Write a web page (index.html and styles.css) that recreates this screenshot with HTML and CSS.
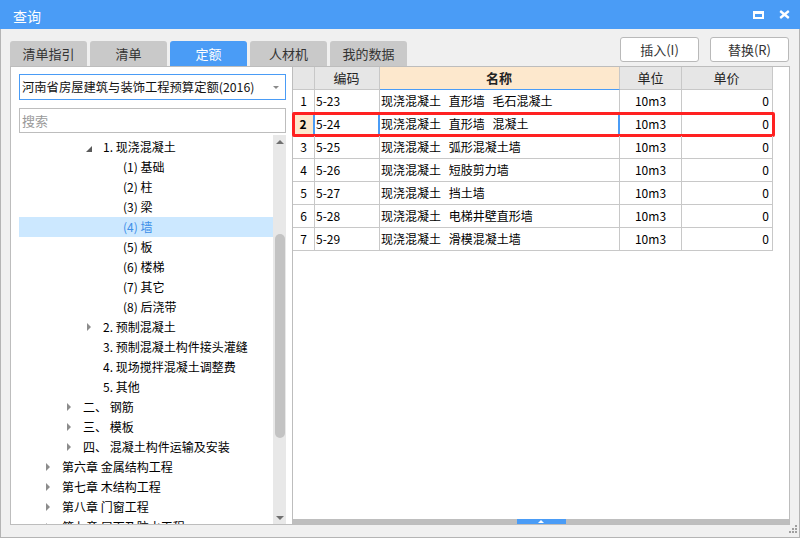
FILE: index.html
```html
<!DOCTYPE html>
<html lang="zh-CN">
<head>
<meta charset="utf-8">
<title>查询</title>
<link rel="stylesheet" href="styles.css">
</head>
<body>
<div class="window">
  <div class="titlebar">
    <span class="title">查询</span>
    <div class="win-btns">
      <svg class="ico" width="11" height="8" viewBox="0 0 11 8"><rect x="1" y="1" width="9" height="6" fill="none" stroke="#fff" stroke-width="2"/><rect x="0" y="0" width="11" height="3" fill="#fff"/></svg>
      <svg class="ico" width="11" height="9" viewBox="0 0 11 9"><path d="M1.2 1 L9.8 8 M9.8 1 L1.2 8" stroke="#fff" stroke-width="2.3" fill="none"/></svg>
    </div>
  </div>
  <div class="main">
    <div class="toprow">
      <div class="tabs">
        <div class="tab">清单指引</div>
        <div class="tab">清单</div>
        <div class="tab active">定额</div>
        <div class="tab">人材机</div>
        <div class="tab">我的数据</div>
      </div>
      <div class="actions">
        <button class="btn">插入(I)</button>
        <button class="btn">替换(R)</button>
      </div>
    </div>
    <div class="content">
      <div class="leftpanel">
        <div class="select"><span>河南省房屋建筑与装饰工程预算定额(2016)</span><i class="caret"></i></div>
        <input class="search" type="text" placeholder="搜索">
        <div class="tree">
          <div class="tree-list">
            <div class="node l2"><i class="tw open"></i><span>1. 现浇混凝土</span></div>
            <div class="node l3"><i class="tw"></i><span>(1) 基础</span></div>
            <div class="node l3"><i class="tw"></i><span>(2) 柱</span></div>
            <div class="node l3"><i class="tw"></i><span>(3) 梁</span></div>
            <div class="node l3 sel"><i class="tw"></i><span>(4) 墙</span></div>
            <div class="node l3"><i class="tw"></i><span>(5) 板</span></div>
            <div class="node l3"><i class="tw"></i><span>(6) 楼梯</span></div>
            <div class="node l3"><i class="tw"></i><span>(7) 其它</span></div>
            <div class="node l3"><i class="tw"></i><span>(8) 后浇带</span></div>
            <div class="node l2"><i class="tw closed"></i><span>2. 预制混凝土</span></div>
            <div class="node l2"><i class="tw"></i><span>3. 预制混凝土构件接头灌缝</span></div>
            <div class="node l2"><i class="tw"></i><span>4. 现场搅拌混凝土调整费</span></div>
            <div class="node l2"><i class="tw"></i><span>5. 其他</span></div>
            <div class="node l1"><i class="tw closed"></i><span>二、 钢筋</span></div>
            <div class="node l1"><i class="tw closed"></i><span>三、 模板</span></div>
            <div class="node l1"><i class="tw closed"></i><span>四、 混凝土构件运输及安装</span></div>
            <div class="node l0"><i class="tw closed"></i><span>第六章 金属结构工程</span></div>
            <div class="node l0"><i class="tw closed"></i><span>第七章 木结构工程</span></div>
            <div class="node l0"><i class="tw closed"></i><span>第八章 门窗工程</span></div>
            <div class="node l0"><i class="tw closed"></i><span>第九章 屋面及防水工程</span></div>
          </div>
          <div class="vscroll">
            <div class="sarrow"><i class="up"></i></div>
            <div class="sspace"></div>
            <div class="sthumb"></div>
            <div class="sfill"></div>
            <div class="sarrow"><i class="down"></i></div>
          </div>
        </div>
      </div>
      <div class="tablepanel">
        <div class="grid">
          <div class="row head">
            <div class="cell c-num"></div>
            <div class="cell c-code">编码</div>
            <div class="cell c-name">名称</div>
            <div class="cell c-unit">单位</div>
            <div class="cell c-price">单价</div>
          </div>
          <div class="row">
            <div class="cell c-num">1</div>
            <div class="cell c-code">5-23</div>
            <div class="cell c-name">现浇混凝土 直形墙 毛石混凝土</div>
            <div class="cell c-unit">10m3</div>
            <div class="cell c-price">0</div>
          </div>
          <div class="row sel">
            <div class="cell c-num">2</div>
            <div class="cell c-code">5-24</div>
            <div class="cell c-name">现浇混凝土 直形墙 混凝土</div>
            <div class="cell c-unit">10m3</div>
            <div class="cell c-price">0</div>
          </div>
          <div class="row">
            <div class="cell c-num">3</div>
            <div class="cell c-code">5-25</div>
            <div class="cell c-name">现浇混凝土 弧形混凝土墙</div>
            <div class="cell c-unit">10m3</div>
            <div class="cell c-price">0</div>
          </div>
          <div class="row">
            <div class="cell c-num">4</div>
            <div class="cell c-code">5-26</div>
            <div class="cell c-name">现浇混凝土 短肢剪力墙</div>
            <div class="cell c-unit">10m3</div>
            <div class="cell c-price">0</div>
          </div>
          <div class="row">
            <div class="cell c-num">5</div>
            <div class="cell c-code">5-27</div>
            <div class="cell c-name">现浇混凝土 挡土墙</div>
            <div class="cell c-unit">10m3</div>
            <div class="cell c-price">0</div>
          </div>
          <div class="row">
            <div class="cell c-num">6</div>
            <div class="cell c-code">5-28</div>
            <div class="cell c-name">现浇混凝土 电梯井壁直形墙</div>
            <div class="cell c-unit">10m3</div>
            <div class="cell c-price">0</div>
          </div>
          <div class="row">
            <div class="cell c-num">7</div>
            <div class="cell c-code">5-29</div>
            <div class="cell c-name">现浇混凝土 滑模混凝土墙</div>
            <div class="cell c-unit">10m3</div>
            <div class="cell c-price">0</div>
          </div>
        </div>
        <div class="hbar"><div class="hthumb"><i></i></div></div>
      </div>
    </div>
    <svg class="grip" width="8" height="8" viewBox="0 0 8 8">
      <rect x="6" y="0" width="2" height="2" fill="#a0a0a0"/>
      <rect x="3" y="3" width="2" height="2" fill="#a0a0a0"/>
      <rect x="6" y="3" width="2" height="2" fill="#a0a0a0"/>
      <rect x="0" y="6" width="2" height="2" fill="#a0a0a0"/>
      <rect x="3" y="6" width="2" height="2" fill="#a0a0a0"/>
      <rect x="6" y="6" width="2" height="2" fill="#a0a0a0"/>
    </svg>
  </div>
</div>
</body>
</html>
```

FILE: styles.css
```css
* { box-sizing: border-box; }
html, body { margin: 0; padding: 0; }
body {
  width: 800px;
  height: 538px;
  overflow: hidden;
  font-family: "Noto Sans CJK SC", "Microsoft YaHei", sans-serif;
  color: #000;
  background: #f0f0f0;
}
.window {
  width: 800px;
  height: 538px;
  display: flex;
  flex-direction: column;
}
.titlebar {
  height: 29px;
  flex: none;
  background: #4a9cf6;
  display: flex;
  align-items: center;
  padding: 0 10px 0 13px;
}
.title {
  color: #fff;
  font-size: 14px;
  line-height: 20px;
  margin-top: 2px;
}
.win-btns {
  margin-left: auto;
  display: flex;
  align-items: center;
  gap: 15px;
}
.ico { display: block; }

.main {
  position: relative;
  flex: 1;
  display: flex;
  flex-direction: column;
  border-left: 1px solid #b4b4b4;
  border-right: 1px solid #b4b4b4;
  border-bottom: 1px solid #b4b4b4;
  padding: 8px 9px 12px 9px;
  min-height: 0;
}
.toprow {
  height: 29px;
  flex: none;
  display: flex;
  justify-content: space-between;
  align-items: flex-start;
}
.tabs {
  display: flex;
  gap: 3px;
  padding-top: 4px;
}
.tab {
  width: 77px;
  height: 25px;
  background: #c9c9c9;
  border-radius: 3px 3px 0 0;
  color: #333;
  font-size: 13px;
  line-height: 25px;
  text-align: center;
}
.tab.active {
  background: #4a9cf6;
  color: #fff;
}
.actions {
  display: flex;
  gap: 11px;
  margin-right: 1px;
}
.btn {
  width: 79px;
  height: 25px;
  background: #fff;
  border: 1px solid #b9b9b9;
  border-radius: 3px;
  font-family: inherit;
  font-size: 13px;
  line-height: 22px;
  color: #333;
  padding: 0;
}

.content {
  flex: 1;
  min-height: 0;
  display: flex;
  border: 1px solid #bdbdbd;
  background: #fff;
}
.leftpanel {
  width: 281px;
  flex: none;
  display: flex;
  flex-direction: column;
  padding: 7px 6px 0 8px;
  min-height: 0;
}
.select {
  height: 26px;
  flex: none;
  border: 1px solid #4a9cf6;
  display: flex;
  align-items: center;
  padding: 0 6px 0 2px;
  font-size: 12.3px;
  color: #111;
  white-space: nowrap;
}
.select span { flex: 1; overflow: hidden; }
.caret {
  width: 0;
  height: 0;
  border-left: 3px solid transparent;
  border-right: 3px solid transparent;
  border-top: 3px solid #8a8a8a;
  margin-left: 4px;
}
.search {
  height: 25px;
  flex: none;
  margin-top: 8px;
  border: 1px solid #bdbdbd;
  padding: 0 2px;
  font-family: inherit;
  font-size: 13px;
  color: #333;
  outline: none;
}
.search::placeholder { color: #9a9a9a; }
.tree {
  flex: 1;
  min-height: 0;
  display: flex;
  margin-top: 2px;
}
.tree-list {
  flex: 1;
  overflow: hidden;
  padding-top: 2px;
}
.node {
  height: 20px;
  display: flex;
  align-items: center;
  font-size: 12px;
  line-height: 20px;
  white-space: nowrap;
  color: #000;
}
.node.l0 { padding-left: 26px; }
.node.l1 { padding-left: 47px; }
.node.l2 { padding-left: 67px; }
.node.l3 { padding-left: 87px; }
.node.sel { background: #cce8ff; color: #3d8fe8; }
.tw {
  width: 17px;
  height: 20px;
  flex: none;
  position: relative;
}
.tw.closed::before {
  content: "";
  position: absolute;
  left: 1px;
  top: 6px;
  border-left: 4px solid #8c8c8c;
  border-top: 4px solid transparent;
  border-bottom: 4px solid transparent;
}
.tw.open::before {
  content: "";
  position: absolute;
  left: 0;
  top: 9px;
  border-right: 6px solid #5a5a5a;
  border-top: 6px solid transparent;
}
.vscroll {
  width: 13px;
  flex: none;
  background: #e8e8e8;
  display: flex;
  flex-direction: column;
  align-items: center;
}
.sarrow {
  height: 13px;
  width: 13px;
  flex: none;
  display: flex;
  align-items: center;
  justify-content: center;
}
.sarrow .up {
  border-left: 4px solid transparent;
  border-right: 4px solid transparent;
  border-bottom: 4px solid #707070;
}
.sarrow .down {
  border-left: 4px solid transparent;
  border-right: 4px solid transparent;
  border-top: 4px solid #707070;
}
.sspace { height: 86px; flex: none; }
.sthumb {
  width: 10px;
  height: 204px;
  flex: none;
  background: #c3c3c3;
  border-radius: 5px;
}
.sfill { flex: 1; }

.tablepanel {
  flex: 1;
  min-width: 0;
  display: flex;
  flex-direction: column;
  border-left: 1px solid #bdbdbd;
}
.grid { flex: none; }
.row {
  display: grid;
  grid-template-columns: 22px 65px 240px 62px 91px;
  width: 480px;
  height: 23px;
  position: relative;
}
.cell {
  border-right: 1px solid #c8c8c8;
  border-bottom: 1px solid #c8c8c8;
  font-size: 12px;
  line-height: 22px;
  padding: 0 2px;
  white-space: nowrap;
  overflow: hidden;
}
.c-num { text-align: center; padding: 0; }
.c-code { padding-left: 1px; }
.c-name { padding-left: 1px; word-spacing: 5px; }
.c-unit { text-align: center; }
.c-price { text-align: right; padding-right: 3px; }
.head .cell {
  background: #e6e6e6;
  font-size: 13px;
  text-align: center;
  color: #222;
}
.head .c-name {
  background: #fde8cd;
  font-weight: bold;
  border-bottom-color: #4a9cf6;
}
.row.sel .c-num {
  background: #fde8cd;
  font-weight: bold;
}
.row.sel .c-num,
.row.sel .c-code,
.row.sel .c-name {
  border-right: 2px solid #4a9cf6;
}
.row.sel::after {
  content: "";
  position: absolute;
  left: -1px;
  right: -2px;
  top: -1px;
  bottom: -1px;
  border: 3px solid #ff2121;
  border-radius: 2px;
  pointer-events: none;
}
.hbar {
  margin-top: auto;
  height: 5px;
  flex: none;
  background: #bebebe;
  display: flex;
  justify-content: center;
}
.hthumb {
  width: 49px;
  height: 5px;
  background: #4a9cf6;
  display: flex;
  align-items: center;
  justify-content: center;
}
.hthumb i {
  border-left: 3px solid transparent;
  border-right: 3px solid transparent;
  border-bottom: 3px solid #fff;
}
.grip {
  position: absolute;
  right: 2px;
  bottom: 4px;
}
```
